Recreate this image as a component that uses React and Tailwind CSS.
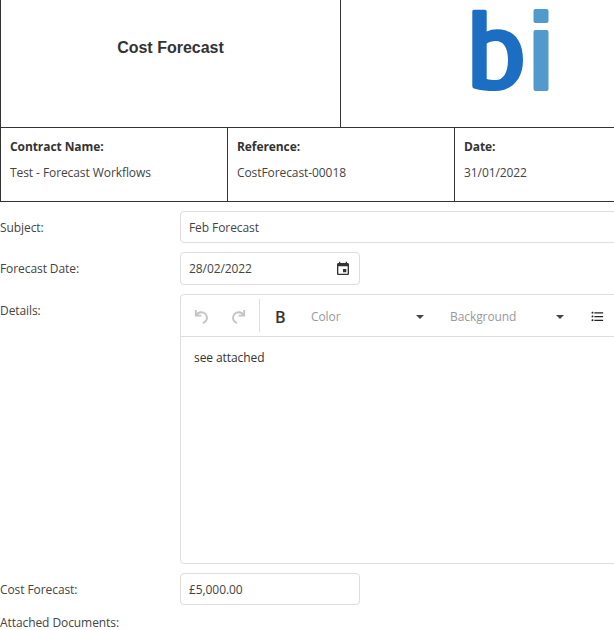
import React from 'react'

function Icon({ d, className }) {
  return (
    <svg viewBox="0 0 24 24" fill="currentColor" className={className}>
      <path d={d} />
    </svg>
  )
}

const calendar = 'M17 12h-5v5h5v-5zM16 1v2H8V1H6v2H5c-1.11 0-1.99.9-1.99 2L3 19c0 1.1.89 2 2 2h14c1.1 0 2-.9 2-2V5c0-1.1-.9-2-2-2h-1V1h-2zm3 18H5V8h14v11z'
const list = 'M4 10.5c-.83 0-1.5.67-1.5 1.5s.67 1.5 1.5 1.5 1.5-.67 1.5-1.5-.67-1.5-1.5-1.5zm0-6c-.83 0-1.5.67-1.5 1.5S3.17 7.5 4 7.5 5.5 6.83 5.5 6 4.83 4.5 4 4.5zm0 12c-.83 0-1.5.68-1.5 1.5s.68 1.5 1.5 1.5 1.5-.68 1.5-1.5-.67-1.5-1.5-1.5zM7 19h14v-2H7v2zm0-6h14v-2H7v2zm0-8v2h14V5H7z'

function UndoIcon({ flip }) {
  return (
    <svg viewBox="0 0 15 15" fill="none" stroke="#c4c4c4" strokeWidth="1.9" className={`h-[15px] w-[15px] ${flip ? '-scale-x-100' : ''}`}>
      <path d="M1.8 1V6.6H7.4" />
      <path d="M2.2 6.2C3.4 4.2 5 3.2 7.2 3.2C10.6 3.2 13 5.8 13 8.6C13 11 11.4 13 9 14" />
    </svg>
  )
}

function InfoCell({ label, value, className }) {
  return (
    <div className={`pl-[9px] pt-[10px] ${className}`}>
      <div className="font-bold leading-[18px] text-[#333]">{label}</div>
      <div className="mt-[8px] leading-[18px] text-[#444]">{value}</div>
    </div>
  )
}

function Arrow() {
  return <span className="h-0 w-0 border-x-[4px] border-t-[4px] border-x-transparent border-t-[#444]" />
}

function Row({ label, children, className }) {
  return (
    <div className={`flex ${className}`}>
      <label className="w-[180px] shrink-0 pt-[8px] leading-[18px] text-[#444]">{label}</label>
      {children}
    </div>
  )
}

export default function App() {
  return (
    <div className="h-[630px] w-[614px] overflow-hidden bg-white text-[12px] tracking-[-0.08px] [font-family:'Open_Sans',sans-serif]">
      <div className="w-[700px]">
        <div className="flex h-[128px] border border-t-0 border-[#333]">
          <div className="flex w-[340px] shrink-0 items-center justify-center border-r border-[#333] pb-[32px] text-[16px] font-bold tracking-normal text-[#333] [font-family:'Liberation_Sans',sans-serif]">
            Cost Forecast
          </div>
          <div className="pl-[131px] pt-[9px]">
            <svg viewBox="472 9 77 83" className="h-[83px] w-[77px] blur-[0.4px]">
              <path
                fill="#1b6ec2"
                fillRule="evenodd"
                d="M472.3 11.5Q472.3 9.7 474 9.7H485Q486.7 9.7 486.7 11.5V31.5Q491 29.3 497 29.3C513 29.3 523 40 523 60C523 80 511 91 495 91C488 91 480 90.5 474 88.5Q472.3 88 472.3 86ZM486.7 79C489 79.6 492 80 496 80C503 80 508 73 508 60C508 47 503 41 496 41C492 41 489 42 486.7 43.5Z"
              />
              <rect x="533.5" y="9" width="15" height="14" rx="2" fill="#5299cc" />
              <rect x="533.5" y="30" width="15" height="61" rx="2" fill="#5299cc" />
            </svg>
          </div>
        </div>
        <div className="flex h-[74px] border border-t-0 border-[#333]">
          <InfoCell label="Contract Name:" value="Test - Forecast Workflows" className="w-[227px] border-r border-[#333]" />
          <InfoCell label="Reference:" value="CostForecast-00018" className="w-[227px] border-r border-[#333]" />
          <InfoCell label="Date:" value="31/01/2022" className="flex-1" />
        </div>
      </div>

      <div className="mt-[9px] w-[700px]">
        <Row label="Subject:">
          <input
            readOnly
            value="Feb Forecast"
            className="h-[32px] flex-1 rounded border border-[#ddd] px-[8px] text-[#444] outline-none"
          />
        </Row>
        <Row label="Forecast Date:" className="mt-[9px]">
          <div className="flex h-[33px] w-[180px] items-center justify-between rounded border border-[#ddd] pl-[8px] pr-[8px] text-[#444]">
            <span>28/02/2022</span>
            <Icon d={calendar} className="h-[16px] w-[16px] text-[#333]" />
          </div>
        </Row>
        <Row label="Details:" className="mt-[9px]">
          <div className="h-[270px] flex-1 rounded border border-[#ddd]">
            <div className="flex h-[42px] items-center border-b border-[#ddd] pt-[2px]">
              <span className="ml-[13px] flex"><UndoIcon /></span>
              <span className="ml-[22px] flex"><UndoIcon flip /></span>
              <span className="mb-[2px] ml-[13px] h-[33px] w-px bg-[#ddd]" />
              <span className="ml-[15px] w-[14px] text-[16px] font-semibold tracking-normal text-[#333]">B</span>
              <span className="ml-[22px] w-[105px] text-[#999]">Color</span>
              <Arrow />
              <span className="ml-[26px] w-[106px] text-[#999]">Background</span>
              <Arrow />
              <Icon d={list} className="ml-[26px] h-[15px] w-[15px] text-[#222]" />
            </div>
            <p className="pl-[13px] pt-[12px] leading-[18px] text-[#333]">see attached</p>
          </div>
        </Row>
        <Row label="Cost Forecast:" className="mt-[9px]">
          <input
            readOnly
            value="£5,000.00"
            className="h-[32px] w-[180px] rounded border border-[#ddd] px-[8px] text-[#444] outline-none"
          />
        </Row>
        <div className="mt-[11px] leading-[14px] text-[#444]">Attached Documents:</div>
      </div>
    </div>
  )
}
